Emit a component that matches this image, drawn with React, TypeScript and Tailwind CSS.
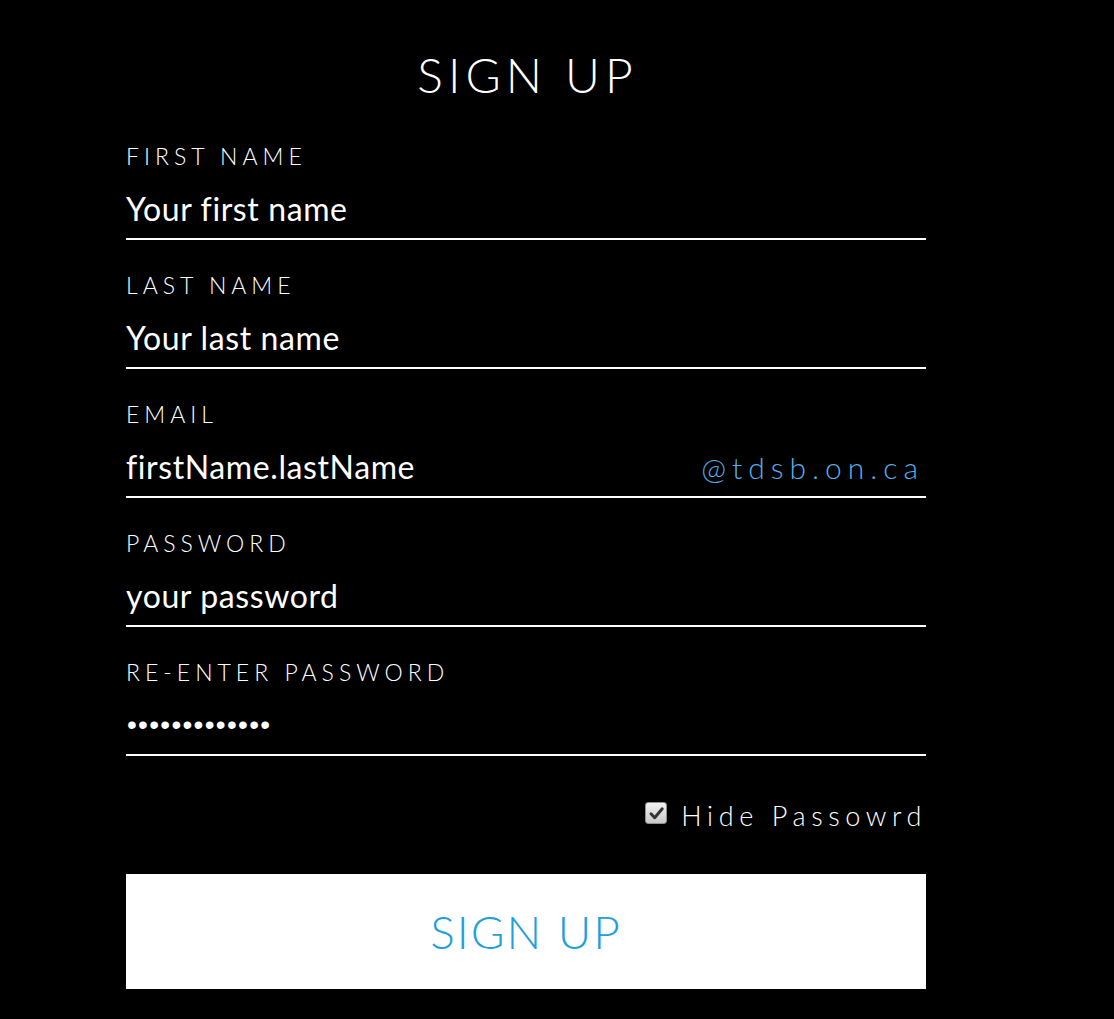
import { useState } from 'react';

const fields = [
   { label: 'FIRST NAME', placeholder: 'Your first name', type: 'text' },
   { label: 'LAST NAME', placeholder: 'Your last name', type: 'text' },
   { label: 'EMAIL', placeholder: 'firstName.lastName', type: 'email', suffix: '@tdsb.on.ca' },
   { label: 'PASSWORD', placeholder: 'your password', type: 'text' },
   { label: 'RE-ENTER PASSWORD', value: 'abcdefghijklm', type: 'password' },
];

export default function App() {
   const [hide, setHide] = useState(true);

   return (
      <div className="min-h-[1019px] bg-black text-white font-['Lato','Open_Sans',sans-serif]">
         <form className="ml-[126px] w-[800px] pt-[45px]" onSubmit={e => e.preventDefault()}>
            <h1 className="text-center text-[48px] leading-[60px] font-light tracking-[5px] pl-[3px]">SIGN UP</h1>

            <div className="mt-[37px] flex flex-col gap-[31px]">
               {fields.map(field => (
                  <div key={field.label}>
                     <label className="block text-[23px] leading-[28px] font-light tracking-[5px]">{field.label}</label>
                     <div className="mt-[18px] h-[52px] pb-[8px] flex items-center border-b-2 border-white">
                        <input
                           type={field.type}
                           defaultValue={field.value}
                           placeholder={field.placeholder}
                           className={`flex-1 h-[42px] bg-transparent text-white placeholder:text-white outline-none ${
                              field.type === 'password'
                                 ? "font-['Liberation_Sans'] text-[28px] tracking-[1.3px] pl-[1px]"
                                 : 'text-[32px] tracking-[0.6px]'
                           }`}
                        />
                        {field.suffix && (
                           <span className="text-[30px] font-light text-[#58aeec] tracking-[6px] mr-[2px]">{field.suffix}</span>
                        )}
                     </div>
                  </div>
               ))}
            </div>

            <div className="mt-[40px] h-[40px] flex items-center justify-end gap-[14px]">
               <button
                  type="button"
                  onClick={() => setHide(!hide)}
                  className="w-[22px] h-[22px] -mt-[6px] rounded-[3px] border border-[#8f8f8f] bg-gradient-to-b from-[#f2f2f2] to-[#c9c9c9] flex items-center justify-center"
               >
                  {hide && (
                     <svg viewBox="0 0 16 16" className="w-[17px] h-[17px]">
                        <path d="M2.8 8.3 L6.3 12 L13.4 3.6" fill="none" stroke="#333" strokeWidth="2.8" strokeLinecap="round" strokeLinejoin="round" />
                     </svg>
                  )}
               </button>
               <span className="text-[27px] font-light tracking-[5.6px] -mr-[1px]">Hide Passowrd</span>
            </div>

            <button type="submit" className="mt-[38px] w-full h-[115px] bg-white text-[#1ea0dc] text-[46px] font-light tracking-[2px]">
               SIGN UP
            </button>
         </form>
      </div>
   );
}
